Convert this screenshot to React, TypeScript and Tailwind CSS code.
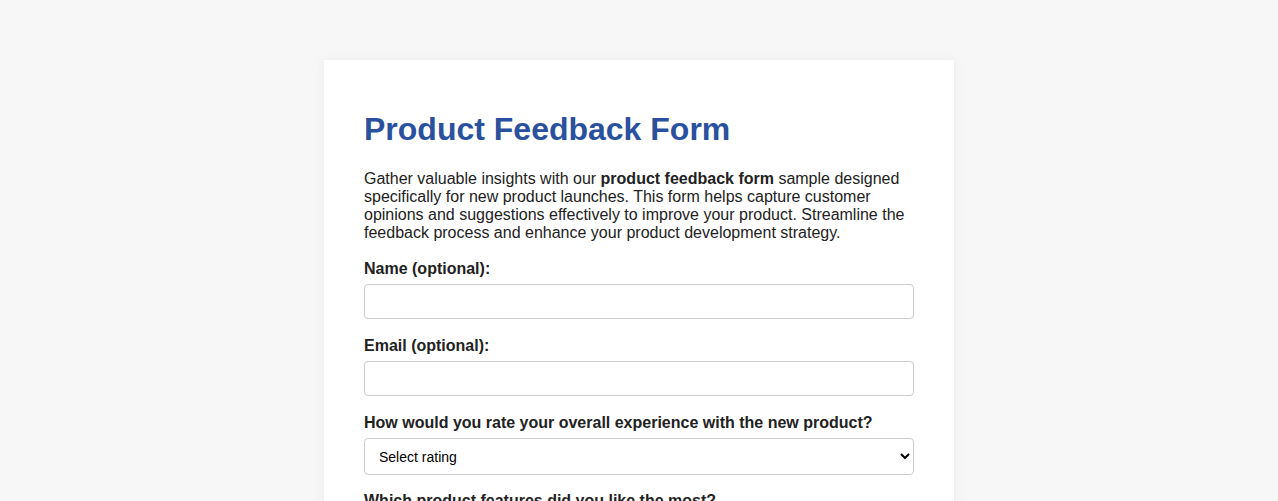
import { useState } from "react";

const features = ["Design", "Ease of use", "Performance", "Price", "Customer support"];

export default function App() {
  const [rating, setRating] = useState("");

  return (
    <div className="min-h-screen bg-[#f7f7f8] px-5 py-[60px] font-['Liberation_Sans',Arial,sans-serif] text-[#222]">
      <div className="mx-auto max-w-[630px] bg-white px-10 pb-10 pt-[51px] shadow-[0_0_10px_rgba(0,0,0,0.06)]">
        <h1 className="mb-[22px] text-[32px] font-bold leading-[37px] text-[#2a519e]">Product Feedback Form</h1>
        <p className="mb-[18px] text-base leading-[18px]">
          Gather valuable insights with our <strong>product feedback form</strong> sample designed specifically for new product launches. This form helps capture customer opinions and suggestions effectively to improve your product. Streamline the feedback process and enhance your product development strategy.
        </p>

        <form onSubmit={(e) => e.preventDefault()}>
          <label htmlFor="name" className="mb-[6px] block text-base font-bold leading-[18px]">Name (optional):</label>
          <input id="name" type="text" className="mb-[18px] block h-[35px] w-full rounded-[4px] border border-[#ccc] px-2 text-base outline-none" />

          <label htmlFor="email" className="mb-[6px] block text-base font-bold leading-[18px]">Email (optional):</label>
          <input id="email" type="email" className="mb-[18px] block h-[35px] w-full rounded-[4px] border border-[#ccc] px-2 text-base outline-none" />

          <label htmlFor="rating" className="mb-[6px] block text-base font-bold leading-[18px]">How would you rate your overall experience with the new product?</label>
          <select
            id="rating"
            value={rating}
            onChange={(e) => setRating(e.target.value)}
            className="mb-[17px] block h-[37px] w-full rounded-[4px] border border-[#ccc] bg-white px-[10px] text-sm text-black outline-none"
          >
            <option value="">Select rating</option>
            <option value="5">Excellent</option>
            <option value="4">Good</option>
            <option value="3">Average</option>
            <option value="2">Poor</option>
            <option value="1">Very poor</option>
          </select>

          <label className="mb-[6px] block text-base font-bold leading-[18px]">Which product features did you like the most?</label>
          <div className="mb-[17px] flex flex-col gap-1">
            {features.map((f) => (
              <label key={f} className="flex items-center gap-2 text-base">
                <input type="checkbox" /> {f}
              </label>
            ))}
          </div>

          <label htmlFor="suggestions" className="mb-[6px] block text-base font-bold leading-[18px]">Any suggestions for improvement?</label>
          <textarea id="suggestions" rows={4} className="mb-[17px] block w-full rounded-[4px] border border-[#ccc] p-2 text-base outline-none" />

          <button type="submit" className="rounded-[4px] bg-[#2a519e] px-5 py-[10px] text-base text-white">Submit Feedback</button>
        </form>
      </div>
    </div>
  );
}
